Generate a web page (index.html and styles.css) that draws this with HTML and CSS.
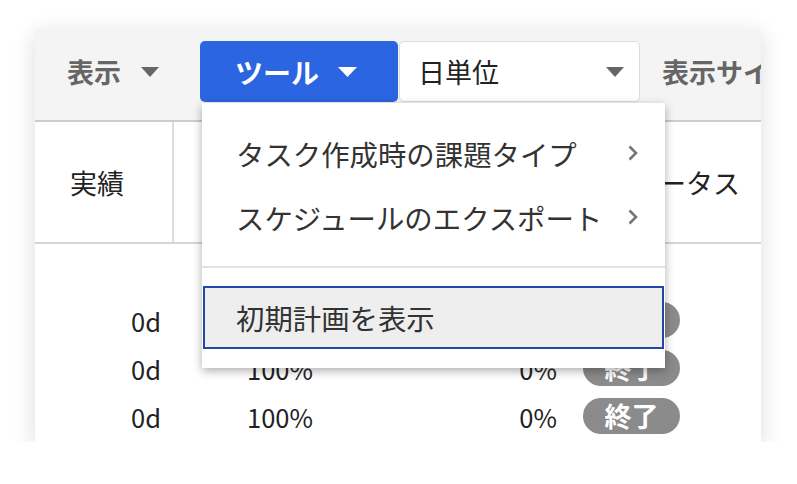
FILE: index.html
```html
<!DOCTYPE html>
<html lang="ja">
<head>
<meta charset="utf-8">
<title>ツール</title>
<link rel="stylesheet" href="styles.css">
</head>
<body>
<div class="card">
  <div class="toolbar">
    <div class="view-btn"><span>表示</span><svg class="tri" width="18" height="10" viewBox="0 0 18 10"><polygon points="0,0 18,0 9,10" fill="#666"/></svg></div>
    <div class="tool-wrap">
      <div class="tool-btn"><span>ツール</span><svg class="tri" width="19" height="10" viewBox="0 0 19 10"><polygon points="0,0 19,0 9.5,10" fill="#fff"/></svg></div>
      <div class="menu">
        <div class="menu-item"><span>タスク作成時の課題タイプ</span><svg class="chev" width="12" height="18" viewBox="0 0 12 18"><polyline points="2.5,2.5 9,9 2.5,15.5" fill="none" stroke="#777" stroke-width="2.6"/></svg></div>
        <div class="menu-item"><span>スケジュールのエクスポート</span><svg class="chev" width="12" height="18" viewBox="0 0 12 18"><polyline points="2.5,2.5 9,9 2.5,15.5" fill="none" stroke="#777" stroke-width="2.6"/></svg></div>
        <div class="menu-sep"></div>
        <div class="menu-item active"><span>初期計画を表示</span></div>
      </div>
    </div>
    <div class="unit-select"><span>日単位</span><svg class="tri" width="18" height="10" viewBox="0 0 18 10"><polygon points="0,0 18,0 9,10" fill="#666"/></svg></div>
    <div class="size-label">表示サイズ</div>
  </div>
  <div class="thead">
    <div class="th th-first">実績</div>
    <div class="th th-mid"></div>
    <div class="th th-mid"></div>
    <div class="th th-status">ステータス</div>
  </div>
  <div class="tbody">
    <div class="row"><div class="c1">0d</div><div class="c2">100%</div><div class="c3">0%</div><div class="c4"><span class="badge">終了</span></div></div>
    <div class="row"><div class="c1">0d</div><div class="c2">100%</div><div class="c3">0%</div><div class="c4"><span class="badge">終了</span></div></div>
    <div class="row"><div class="c1">0d</div><div class="c2">100%</div><div class="c3">0%</div><div class="c4"><span class="badge">終了</span></div></div>
  </div>
</div>
</body>
</html>
```
FILE: styles.css
```css
html, body {
  margin: 0;
  padding: 0;
  background: #ffffff;
}
body {
  font-family: "Noto Sans CJK JP", "Noto Sans", sans-serif;
  color: #222;
}
.card {
  margin: 29px 0 0 35px;
  width: 726px;
  height: 413px;
  background: #fff;
  box-shadow: 0 5px 22px rgba(0, 0, 0, 0.14);
  overflow: hidden;
  position: relative;
}
.toolbar {
  display: flex;
  align-items: flex-start;
  height: 93px;
  box-sizing: border-box;
  padding: 12px 0 0 32px;
  background: #f4f4f4;
  border-bottom: 2px solid #cdcdcd;
  white-space: nowrap;
}
.toolbar > * {
  flex-shrink: 0;
}
.view-btn {
  display: flex;
  align-items: center;
  gap: 20px;
  height: 61px;
  font-size: 27px;
  font-weight: bold;
  color: #666;
  margin-right: 41px;
}
.tri {
  display: block;
  flex-shrink: 0;
}
.tool-wrap {
  position: relative;
  z-index: 5;
}
.tool-btn {
  display: flex;
  align-items: center;
  gap: 19px;
  width: 198px;
  height: 61px;
  box-sizing: border-box;
  padding-left: 35px;
  background: #2c65e1;
  border-radius: 5px;
  color: #fff;
  font-size: 28px;
  font-weight: bold;
}
.menu {
  position: absolute;
  left: 2px;
  top: 62px;
  width: 463px;
  box-sizing: border-box;
  padding: 18px 0 19px;
  background: #fff;
  box-shadow: 0 3px 9px rgba(0, 0, 0, 0.32);
}
.menu-item {
  display: flex;
  align-items: center;
  justify-content: space-between;
  height: 64px;
  box-sizing: border-box;
  padding: 0 26px 0 34px;
  font-size: 28.4px;
  color: #333;
}
.chev {
  display: block;
}
.menu-sep {
  height: 2px;
  background: #e2e2e2;
  margin: 17px 0 18px;
}
.menu-item.active {
  height: 63px;
  margin: 0 1px;
  padding-left: 31px;
  border: 2px solid #2446a8;
  background: #eeeeee;
}
.unit-select {
  display: flex;
  align-items: center;
  justify-content: space-between;
  width: 241px;
  height: 61px;
  box-sizing: border-box;
  margin-left: 1px;
  padding: 0 15px 0 18px;
  background: #fff;
  border: 1px solid #dcdcdc;
  border-radius: 5px;
  font-size: 27px;
  color: #222;
}
.size-label {
  height: 61px;
  display: flex;
  align-items: center;
  margin-left: 22px;
  font-size: 27px;
  font-weight: bold;
  color: #666;
}
.thead {
  display: grid;
  grid-template-columns: 139px 152px 245px 1fr;
  height: 122px;
  box-sizing: border-box;
  border-bottom: 2px solid #d6d6d6;
}
.th {
  display: flex;
  align-items: center;
  font-size: 27px;
  color: #222;
}
.th-first {
  padding-left: 35px;
  border-right: 2px solid #dddddd;
}
.th-status {
  padding-left: 34px;
}
.tbody {
  padding-top: 52px;
}
.row {
  display: grid;
  grid-template-columns: 139px 152px 245px 1fr;
  height: 48px;
  align-items: center;
  font-size: 25.5px;
  color: #222;
}
.c1 {
  text-align: right;
  padding-right: 13px;
}
.c2 {
  text-align: right;
  padding-right: 13px;
}
.c3 {
  text-align: right;
  padding-right: 14px;
}
.c4 {
  padding-left: 12px;
  display: flex;
  align-items: center;
}
.badge {
  display: flex;
  align-items: center;
  justify-content: center;
  width: 97px;
  height: 36px;
  border-radius: 18px;
  background: #8b8b8b;
  color: #fff;
  font-size: 27px;
  font-weight: bold;
  line-height: 36px;
}
```
